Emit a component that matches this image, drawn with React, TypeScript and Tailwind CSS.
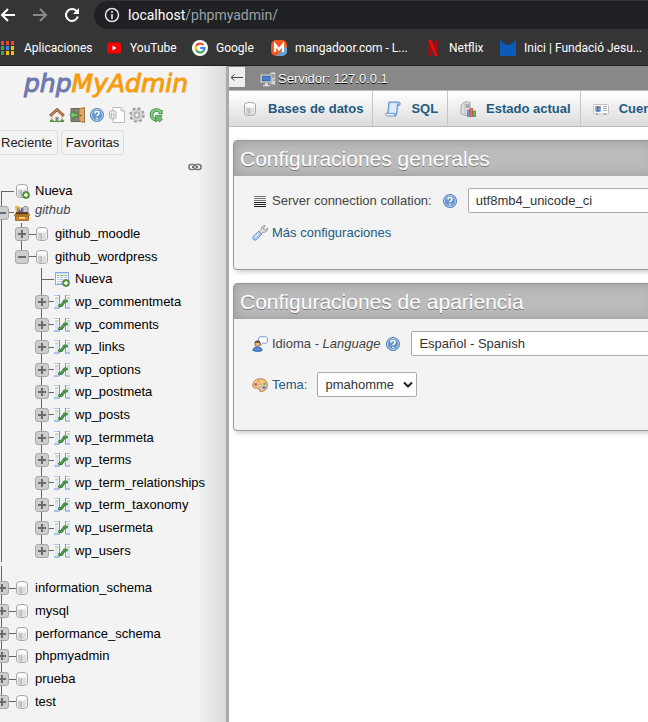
import React from "react";

type Row = { name: string };

const wordpressTables: Row[] = [
  { name: "wp_commentmeta" },
  { name: "wp_comments" },
  { name: "wp_links" },
  { name: "wp_options" },
  { name: "wp_postmeta" },
  { name: "wp_posts" },
  { name: "wp_termmeta" },
  { name: "wp_terms" },
  { name: "wp_term_relationships" },
  { name: "wp_term_taxonomy" },
  { name: "wp_usermeta" },
  { name: "wp_users" },
];

const databases: Row[] = [
  { name: "information_schema" },
  { name: "mysql" },
  { name: "performance_schema" },
  { name: "phpmyadmin" },
  { name: "prueba" },
  { name: "test" },
];

/* ---------- icons ---------- */

function Svg({ children, size = 16 }: { children: React.ReactNode; size?: number }) {
  return (
    <svg width={size} height={size} viewBox="0 0 16 16" className="block shrink-0" fill="none" aria-hidden="true">
      {children}
    </svg>
  );
}

function Cylinder() {
  return (
    <>
      <path d="M2.500 3.600C2.500 0.800 13.500 0.800 13.500 3.600V12.400C13.500 15.200 2.500 15.200 2.500 12.400Z" fill="#f1f1f1" stroke="#a6a6a6" />
      <path d="M4 6.500c1.200.6 2.500.8 4 .8v6.200C6.600 13.500 5 13.200 4 12.500Z" fill="#cfcfcf" />
      <path d="M8 7.300c1.500 0 3-.3 4-.8v6c-1 .7-2.500 1-4 1z" fill="#dedede" />
      <path d="M6.500 7h1.500v6.500h-1.500z" fill="#bcbcbc" />
      <ellipse cx="8" cy="4" rx="4.400" ry="1.700" fill="#fff" />
    </>
  );
}

const DbIcon = () => (
  <Svg>
    <Cylinder />
  </Svg>
);

function AddBadge() {
  return (
    <>
      <circle cx="12" cy="12" r="3.500" fill="#5f9c3f" stroke="#3c7428" strokeWidth=".7" />
      <path d="M12 10v4M10 12h4" stroke="#fff" strokeWidth="1.300" />
    </>
  );
}

const DbAddIcon = () => (
  <Svg>
    <Cylinder />
    <AddBadge />
  </Svg>
);

const TableAddIcon = () => (
  <Svg>
    <rect x="1.500" y="1.500" width="13" height="12" fill="#fff" stroke="#86ade0" />
    <path d="M2 2.500h12" stroke="#c3d9f3" />
    <path d="M3 4.500h10" stroke="#77b45d" />
    <path d="M3 6.500h10M3 8.500h10M3 10.500h8M3 12.500h6" stroke="#a9c4e6" />
    <path d="M5.500 4v9M10 4v9" stroke="#fff" strokeWidth=".8" />
    <AddBadge />
  </Svg>
);

const TableIcon = () => (
  <Svg>
    <path d="M0 1.500h5v12.500H0zM12 1.500h4v12.500h-4z" fill="#fff" />
    <path d="M0 1.500h5M12 1.500h4" stroke="#a9c6ec" />
    <path d="M0 14h5.500M11.500 14H16" stroke="#5c8ccc" />
    <path d="M5.500 1v13M11.500 1v13" stroke="#6d98d4" />
    <path d="M1 4h3.500M13 4h3" stroke="#85ba70" />
    <path d="M1 6h3.500M1 8h3.500M1 10h3.500M1 12h3.500M13 6h3M13 8h3M13 10h3M13 12h3" stroke="#b5cdea" />
    <path d="M5.500 11.500H7.500L10.500 7H12.500" stroke="#367d3a" strokeWidth="3" strokeLinecap="round" strokeLinejoin="round" />
    <path d="M5.500 11.300H7.500L10.500 6.800H12.500" stroke="#62ad60" strokeWidth="1" strokeLinecap="round" />
  </Svg>
);

const GroupIcon = () => (
  <Svg>
    <path d="M1 1.500l2-1 2 1-1 7H2z" fill="#e7bd3d" />
    <path d="M4 3h4v7H4z" fill="#e8e8f0" stroke="#77708d" strokeWidth=".8" />
    <path d="M5 8V4.500L6.500 7 8 3.500V8" stroke="#5b3b83" />
    <path d="M9 2.500c0-1.500 5-1.500 5 0V9H9z" fill="#c9c9cd" stroke="#777" strokeWidth=".8" />
    <path d="M2.500 7h11l1.800 2.500H.7z" fill="#5a3f28" />
    <path d="M.6 9.500h14.800V11H.6z" fill="#efa83a" stroke="#9a6016" strokeWidth=".7" />
    <path d="M1.500 11h13v4.400h-13z" fill="#d3871f" stroke="#8a5410" strokeWidth=".8" />
    <path d="M5 12.800h6" stroke="#fbe0a5" strokeWidth="1.500" />
  </Svg>
);

const HomeIcon = () => (
  <Svg>
    <path d="M3 8.500L8 4l5 4.500V14.500H3z" fill="#f6eee2" stroke="#a88260" strokeWidth=".8" />
    <path d="M1 8.800L8 2.500l7 6.300" stroke="#8b5a32" strokeWidth="2.500" />
    <path d="M1.500 8.400L8 2.600l6.500 5.800" stroke="#dca76d" strokeWidth="1" />
    <path d="M6.500 10h3v5h-3z" fill="#7b8896" />
    <path d="M.5 14.300c.5-2.400 4-2.400 4.500 0zM11 14.300c.5-2.400 4-2.400 4.500 0z" fill="#58a440" />
    <path d="M1 14.500h14" stroke="#4d8f37" />
  </Svg>
);

const ExitIcon = () => (
  <Svg>
    <path d="M2 1.500h9v13H2z" fill="#86827b" stroke="#6a655d" />
    <path d="M10 1.800L15.500.5v15L10 14.200z" fill="#dca667" stroke="#9a6429" strokeWidth=".8" />
    <circle cx="11.500" cy="8.500" r=".8" fill="#6b4218" />
    <path d="M.8 8L5 3.800v2.500h4v3.400H5v2.500z" fill="#7cc56c" stroke="#2f7a2c" strokeWidth=".8" />
  </Svg>
);

const HelpIcon = () => (
  <Svg>
    <circle cx="8" cy="8" r="6.600" fill="#6795cc" stroke="#4f7bb4" strokeWidth=".8" />
    <circle cx="8" cy="8" r="5.500" stroke="#c2d7ef" strokeWidth=".9" />
    <path d="M6 6.500c0-2.700 4-2.600 4-.2 0 1.500-2 1.500-2 3" stroke="#fff" strokeWidth="1.600" />
    <path d="M8 10.700v1.500" stroke="#fff" strokeWidth="1.600" />
  </Svg>
);

const DocsIcon = () => (
  <Svg>
    <path d="M4 .5h8L15.500 4v11.500H4z" fill="#fff" stroke="#bbb" />
    <path d="M12 .5V4h3.500" fill="#eee" stroke="#bbb" />
    <path d="M.5 5c0-1.700 6.500-1.700 6.500 0v5.500c0 1.700-6.500 1.700-6.500 0z" fill="#eee" stroke="#a7a7a7" strokeWidth=".9" />
    <path d="M2.500 6v4.500M4.800 6v4.500" stroke="#b3b3b3" />
  </Svg>
);

const GearIcon = () => (
  <Svg>
    <circle cx="8" cy="8" r="6.500" stroke="#989898" strokeWidth="2.400" strokeDasharray="2.600 2.500" />
    <circle cx="8" cy="8" r="4.400" stroke="#a3a3a3" strokeWidth="3.400" />
    <circle cx="8" cy="8" r="4.500" stroke="#d9d9d9" strokeWidth="2.200" />
    <circle cx="8" cy="8" r="2.200" fill="#f3f3f3" stroke="#909090" strokeWidth=".8" />
  </Svg>
);

const ReloadIcon = () => (
  <Svg>
    <path d="M11.500 5C9 1.500 2.500 2.800 2.500 7.800c0 3 2 4.700 4.500 4.700" stroke="#3d8b42" strokeWidth="3.600" />
    <path d="M11.500 5C9 1.500 2.500 2.800 2.500 7.800c0 3 2 4.700 4.500 4.700" stroke="#83c985" strokeWidth="2" />
    <path d="M6.500 8.500h6.500l-1 2.500 1.500 1.500-3 2.500-1.500-1.500-2.500 1.500z" fill="#6aba6d" stroke="#3d8b42" strokeWidth=".7" />
    <path d="M9.500 6.500h3.500V3" stroke="#4a994f" strokeWidth="1.400" />
  </Svg>
);

const LinkIcon = () => (
  <Svg>
    <rect x="2" y="5.500" width="6.500" height="5" rx="2" stroke="#777" strokeWidth="1.600" />
    <rect x="7.500" y="5.500" width="6.500" height="5" rx="2" stroke="#777" strokeWidth="1.600" />
    <path d="M5 8h2M9 8h2" stroke="#444" strokeWidth="1.600" />
    <path d="M7 8h2" stroke="#ddd" strokeWidth="1.600" />
  </Svg>
);

const ServerIcon = () => (
  <Svg>
    <path d="M10 1.500l5.500-.8v13.600l-5.500-1z" fill="#d8d8d8" stroke="#888" strokeWidth=".7" />
    <path d="M12 4h2.500M12 6h2.500" stroke="#666" />
    <path d="M13 9h1.500" stroke="#58b34f" strokeWidth="1.500" />
    <rect x=".7" y="3.500" width="11" height="8" fill="#eee" stroke="#aaa" />
    <rect x="2.200" y="5" width="8" height="5" fill="#4b7fcb" stroke="#23508f" strokeWidth=".7" />
    <path d="M5 12h3v2h2v1.200H3V14h2z" fill="#ddd" />
  </Svg>
);

const SqlIcon = () => (
  <Svg>
    <path d="M4 1H14c1.700.3 1.700 3 0 3.500H12.700L11.500 14H2.500z" fill="#a8ccf4" stroke="#5b8fd0" />
    <path d="M5.300 2.200h6.500L10.500 12H4z" fill="#dcebfc" />
    <path d="M.8 12.300h8.500c-.3 2 .6 2.700 1.700 2.700H2.500C1 15 .5 14 .8 12.300z" fill="#eef6fe" stroke="#5b8fd0" strokeWidth=".9" />
    <path d="M12.700 4.500V2.500" stroke="#5b8fd0" />
  </Svg>
);

const StatusIcon = () => (
  <Svg>
    <path d="M1 4l4-3.300 5 .8v11L6 14.500 1 13z" fill="#dedede" stroke="#9a9a9a" strokeWidth=".8" />
    <path d="M5.500 4h4M5.500 6h4" stroke="#777" />
    <path d="M5 2v12" stroke="#bbb" />
    <path d="M7.500 9h2.400v6.500H7.500z" fill="#6da0e8" stroke="#3365b4" strokeWidth=".6" />
    <path d="M10.200 7.500h2.400v8h-2.400z" fill="#f2705a" stroke="#c3311f" strokeWidth=".6" />
    <path d="M13 10h2.500v5.500H13z" fill="#6cbc5c" stroke="#337e2b" strokeWidth=".6" />
  </Svg>
);

const CardIcon = () => (
  <Svg>
    <rect x=".5" y="3.500" width="15" height="9.500" rx="1" fill="#fafafa" stroke="#c4c4c4" />
    <rect x="2" y="5" width="6" height="5.500" fill="#74aee6" />
    <circle cx="5" cy="6.800" r="1.500" fill="#a35b2b" />
    <path d="M3 10.500c.3-2.300 3.700-2.300 4 0z" fill="#2d66ac" />
    <path d="M10 5.500h4M10 7.500h4M10 9.500h4" stroke="#a9b4c2" />
    <path d="M3 13h2M11 13h2" stroke="#777" />
  </Svg>
);

const LinesIcon = () => (
  <Svg>
    <path d="M2 3.500h12M2 5.500h12M2 7.500h12" stroke="#777" />
    <path d="M2 9.500h12M2 11.500h12M2 13.500h12" stroke="#222" />
  </Svg>
);

const WrenchIcon = () => (
  <Svg>
    <path d="M7.500 6.500l1.800-2C9 2 11 .6 13.200.8L11.500 2.800l.3 1.700 1.700.3L15.500 3.200c.3 3-2.300 4.600-4.700 4l-1.800 2z" fill="#e4e4e4" stroke="#8a8a8a" strokeWidth=".9" />
    <path d="M6.800 6.200l3 3-5.300 5.500c-2 1.500-4.800-1-3.300-3.300z" fill="#a9c7f2" stroke="#5f8bd0" strokeWidth=".9" />
    <path d="M2.800 12.300L7 8" stroke="#e0ebfb" strokeWidth="1.300" />
  </Svg>
);

const LanguageIcon = () => (
  <Svg>
    <path d="M8 .7h6l1.500 1.200v4L14 7.200h-2.800L7.700 9.500 8.500 7 6.700 5.500V2z" fill="#f5faff" stroke="#7199cd" strokeWidth=".9" />
    <path d="M.8 14.500c0-5 9.400-5 9.400 0-2 1.300-7.400 1.300-9.400 0z" fill="#4d8bdb" stroke="#2457a0" strokeWidth=".7" />
    <circle cx="5.500" cy="7.800" r="2.700" fill="#eab887" stroke="#7d4b22" strokeWidth=".7" />
    <path d="M2.700 7.300c0-3.500 5.500-3.800 5.700 0-2-1.200-4-1.200-5.700 0z" fill="#6a3f1e" />
  </Svg>
);

const PaletteIcon = () => (
  <Svg>
    <path d="M.8 8C1 4 4.500 1.800 8.500 1.800c4 0 6.800 2.500 6.800 6 0 4-3 6.700-6 6.700-2.800 0-1.300-2.700-3.300-3.300C4 10.700.8 12 .8 8z" fill="#f0c79c" stroke="#b06c34" strokeWidth=".9" />
    <circle cx="3.800" cy="7.500" r="1.400" fill="#dd5a3c" />
    <circle cx="6.300" cy="4.700" r="1.400" fill="#f0a63a" />
    <circle cx="10" cy="4.300" r="1.300" fill="#f2d340" />
    <circle cx="12.700" cy="6.800" r="1.300" fill="#6cb45a" />
    <circle cx="12" cy="10.500" r="1.500" fill="#4a83d0" />
    <circle cx="8.300" cy="8.500" r="1.300" fill="#fff" stroke="#a4622c" strokeWidth=".6" />
  </Svg>
);

/* ---------- browser frame ---------- */

function BrowserBar() {
  const bookmark = "flex shrink-0 items-center whitespace-nowrap";
  return (
    <header className="h-[66px] shrink-0 overflow-hidden border-b border-[#1f1f1f] bg-[#353535] font-['Roboto','Open_Sans',sans-serif] text-white">
      <div className="flex h-[30px] items-center">
        <button aria-label="Atrás" className="w-4">
          <svg width="16" height="16" viewBox="0 0 16 16" fill="none" stroke="#fff" strokeWidth="2">
            <path d="M15 8H2.500M8 2L2 8l6 6" />
          </svg>
        </button>
        <button aria-label="Adelante" className="ml-4 w-4">
          <svg width="16" height="16" viewBox="0 0 16 16" fill="none" stroke="#8a8a8a" strokeWidth="2">
            <path d="M1 8h12.500M8 2l6 6-6 6" />
          </svg>
        </button>
        <button aria-label="Recargar" className="ml-4 w-4">
          <svg width="16" height="16" viewBox="0 0 16 16" fill="none" stroke="#fff" strokeWidth="2">
            <path d="M13.800 9.500A6 6 0 1 1 12.500 4L14 5.500" />
            <path d="M15 1v6H9z" fill="#fff" stroke="none" />
          </svg>
        </button>
        <div className="-mr-5 ml-[14px] flex h-7 flex-1 items-center rounded-full bg-[#202124] pl-[10px]">
          <svg width="16" height="16" viewBox="0 0 16 16" fill="none" stroke="#dfe1e5" strokeWidth="1.500">
            <circle cx="8" cy="8" r="6.500" />
            <path d="M8 7v5M8 4v1.700" strokeWidth="1.700" />
          </svg>
          <p className="ml-2 text-[14px] leading-5 text-[#9aa0a6]">
            <span className="text-white">localhost</span>/phpmyadmin/
          </p>
        </div>
      </div>
      <nav className="flex h-[35px] items-center text-[12px] leading-4">
        <a href="#apps" className={bookmark}>
          <svg width="14" height="14" viewBox="0 0 14 14" className="mr-[10px]">
            <path d="M1 0h3v4H1zM6 0h3v4H6zM11 0h3v4h-3z" fill="#ea4335" />
            <path d="M1 5h3v4H1z" fill="#34a853" />
            <path d="M6 5h3v4H6z" fill="#4285f4" />
            <path d="M11 5h3v4h-3z" fill="#fbbc04" />
            <path d="M1 10h3v4H1z" fill="#34a853" />
            <path d="M6 10h3v4H6zM11 10h3v4h-3z" fill="#fbbc04" />
          </svg>
          <span className="w-[82px]">Aplicaciones</span>
        </a>
        <a href="#youtube" className={bookmark}>
          <svg width="16" height="16" viewBox="0 0 16 16" className="mr-2">
            <rect x="1" y="2.500" width="14" height="11" rx="2.500" fill="#f00" />
            <path d="M6.500 5.500v5l4-2.500z" fill="#fff" />
          </svg>
          <span className="w-[62px]">YouTube</span>
        </a>
        <a href="#google" className={bookmark}>
          <svg width="16" height="16" viewBox="0 0 16 16" className="mr-2" fill="none" strokeWidth="2.200">
            <circle cx="8" cy="8" r="8" fill="#fff" />
            <path d="M4.200 5.700A4.500 4.500 0 0 1 11.300 4.900" stroke="#ea4335" />
            <path d="M4.200 5.700a4.500 4.500 0 0 0 0 4.600" stroke="#fbbc04" />
            <path d="M4.200 10.300a4.500 4.500 0 0 0 6.800 1.100" stroke="#34a853" />
            <path d="M11 11.400A4.500 4.500 0 0 0 12.500 8H8.200" stroke="#4285f4" />
          </svg>
          <span className="w-[55px]">Google</span>
        </a>
        <a href="#mangadoor" className={bookmark}>
          <svg width="16" height="16" viewBox="0 0 16 16" className="mr-2">
            <rect width="16" height="16" rx="5" fill="#f4581f" />
            <path d="M16 6v5a5 5 0 0 1-5 5H5z" fill="#5aa4e0" />
            <path d="M4 12V4.500l4 5 4-5V12" fill="none" stroke="#fff" strokeWidth="2.200" />
          </svg>
          <span className="w-[130px]">mangadoor.com - L...</span>
        </a>
        <a href="#netflix" className={bookmark}>
          <svg width="16" height="16" viewBox="0 0 16 16" className="mr-2">
            <path d="M3.500 0h3v16h-3zM9.500 0h3v16h-3z" fill="#b1060f" />
            <path d="M3.500 0h3l6 16h-3z" fill="#e50914" />
          </svg>
          <span className="w-[51px]">Netflix</span>
        </a>
        <a href="#fundacio" className={bookmark}>
          <svg width="16" height="16" viewBox="0 0 16 16" className="mr-2">
            <path d="M0 0l2 1.500L3 3l2 1 3 1 3-1 2-1 1-1.500L16 0v16H0z" fill="#0a5cb8" />
            <path d="M2 0l2 2 4 1.500L12 2l2-2" fill="none" stroke="#0f4280" strokeDasharray="1 1" />
          </svg>
          <span>Inici | Fundació Jesu...</span>
        </a>
      </nav>
    </header>
  );
}

/* ---------- navigation tree ---------- */

function Toggle({ open, last }: { open?: boolean; last?: boolean }) {
  return (
    <div className="flex w-[14px] shrink-0 flex-col self-stretch">
      <div className="ml-[6px] w-px flex-1 bg-[#666]" />
      <button
        aria-label={open ? "Contraer" : "Expandir"}
        className="flex h-[14px] w-[14px] shrink-0 items-center justify-center rounded-[3px] border border-[#a8a8a8] bg-[#cecece]"
      >
        <svg width="10" height="10" viewBox="0 0 10 10" stroke="#6c6c6c" strokeWidth="2" className="block shrink-0">
          <path d={open ? "M1 5h8" : "M1 5h8M5 1v8"} />
        </svg>
      </button>
      <div className={last ? "ml-[6px] w-px flex-1" : "ml-[6px] w-px flex-1 bg-[#666]"} />
    </div>
  );
}

function Guide({ line }: { line?: boolean }) {
  return (
    <div className="w-5 shrink-0 self-stretch pl-[6px]">
      <div className={line ? "h-full w-px bg-[#666]" : "h-full w-px"} />
    </div>
  );
}

const Dash = () => <div className="h-px w-[5px] shrink-0 bg-[#666]" />;

const DbDash = () => <div className="-mr-[2px] h-px w-[7px] shrink-0 bg-[#666]" />;

function Label({ children }: { children: string }) {
  return (
    <a href="#tree" className="ml-[5px] whitespace-nowrap text-black">
      {children}
    </a>
  );
}

function Sidebar() {
  return (
    <aside className="flex w-[229px] shrink-0 flex-col overflow-hidden border-r-[3px] border-[#aaa] bg-linear-to-r from-[#f3f3f3] from-87% to-[#d9dbdd]">
      <div className="mt-px pl-[24px] font-['DejaVu_Sans',sans-serif] text-[25px] leading-[34px] italic [-webkit-text-stroke:1px_currentColor]">
        <a href="#home" className="text-[#6c78af]">
          php<span className="text-[#f89c0e]">MyAdmin</span>
        </a>
      </div>
      <div className="mt-[6px] flex gap-1 pl-[49px] pr-[40px]">
        <button aria-label="Inicio"><HomeIcon /></button>
        <button aria-label="Salir"><ExitIcon /></button>
        <button aria-label="Ayuda"><HelpIcon /></button>
        <button aria-label="Documentación"><DocsIcon /></button>
        <button aria-label="Configuración"><GearIcon /></button>
        <button aria-label="Recargar navegación"><ReloadIcon /></button>
      </div>
      <div className="mt-[7px] flex gap-[3px] text-[13px] leading-[23px] text-[#222]">
        <button className="-ml-1 w-[62px] rounded-[3px] border border-[#ddd] pl-1 text-left">Reciente</button>
        <button className="w-[63px] rounded-[3px] border border-[#ddd] text-center">Favoritas</button>
      </div>
      <div className="mt-1 flex justify-end pr-[23px]">
        <button aria-label="Enlazar con el panel principal"><LinkIcon /></button>
      </div>

      <div className="-ml-[5px] mt-[5px] text-[13px] leading-4">
        <div className="flex h-[22px] items-center">
          <div className="flex w-[19px] flex-col self-stretch pl-[6px] pt-[11px]">
            <div className="w-full flex-1 border-l border-t border-[#666]" />
          </div>
          <DbAddIcon />
          <Label>Nueva</Label>
        </div>
        <div className="flex h-[21px] items-center">
          <Toggle open />
          <Dash />
          <GroupIcon />
          <a href="#github" className="mb-[5px] ml-[5px] text-[#444] italic">github</a>
        </div>
        <div className="flex h-[22px] items-center">
          <Guide line />
          <Toggle />
          <DbDash />
          <DbIcon />
          <Label>github_moodle</Label>
        </div>
        <div className="flex h-[23px] items-center">
          <Guide line />
          <Toggle open last />
          <DbDash />
          <DbIcon />
          <Label>github_wordpress</Label>
        </div>
        <div className="flex h-[294px] flex-col">
          <div className="flex flex-1 items-center">
            <Guide line />
            <Guide />
            <div className="flex w-[19px] shrink-0 items-center self-stretch pl-[6px]">
              <div className="h-full w-px bg-[#666]" />
              <div className="h-px flex-1 bg-[#666]" />
            </div>
            <TableAddIcon />
            <Label>Nueva</Label>
          </div>
          {wordpressTables.map((t, i) => (
            <div key={t.name} className="flex flex-1 items-center">
              <Guide line />
              <Guide />
              <Toggle last={i === wordpressTables.length - 1} />
              <Dash />
              <TableIcon />
              <Label>{t.name}</Label>
            </div>
          ))}
        </div>
        <div className="mt-1 flex h-[11px]">
          <Guide line />
        </div>
        <div className="flex h-[136px] flex-col">
          {databases.map((d, i) => (
            <div key={d.name} className="flex flex-1 items-center">
              <Toggle last={i === databases.length - 1} />
              <DbDash />
              <DbIcon />
              <Label>{d.name}</Label>
            </div>
          ))}
        </div>
      </div>
    </aside>
  );
}

/* ---------- main panel ---------- */

function Tab({ icon, children }: { icon: React.ReactNode; children: string }) {
  return (
    <a
      href="#tab"
      className="flex shrink-0 items-center gap-[10px] border-r border-[#c4c4c4] pl-3 pr-[9px] text-[13px] font-bold whitespace-nowrap text-[#235a81]"
    >
      {icon}
      {children}
    </a>
  );
}

function Panel({ title, children }: { title: string; children: React.ReactNode }) {
  return (
    <section className="-mr-2 ml-1 overflow-hidden rounded-[4px] border border-[#999] bg-[#f3f3f3] shadow-[2px_2px_5px_#ccc]">
      <h2 className="h-[35px] bg-[#bbb] pl-[6px] text-[21px] leading-9 whitespace-nowrap text-white shadow-[inset_0_0_12px_#999] [text-shadow:0_1px_0_#777]">
        {title}
      </h2>
      {children}
    </section>
  );
}

function Main() {
  const field = "h-[25px] shrink-0 appearance-none rounded-[2px] border border-[#aaa] bg-white pl-[7px] text-[13px] text-[#333]";
  return (
    <main className="min-w-0 flex-1 overflow-hidden bg-white">
      <div className="flex h-6 items-center bg-[#888] text-[13px] text-white">
        <button aria-label="Ocultar panel" className="mb-[2px] flex h-5 w-4 items-center justify-center bg-[#eee]">
          <svg width="14" height="8" viewBox="0 0 14 8" fill="none" stroke="#444">
            <path d="M13 4.500H1.500M4.500 1.500L1 4.500l3.500 3" />
          </svg>
        </button>
        <a href="#server" className="ml-[15px] flex items-center gap-[2px] pt-[2px] [text-shadow:0_1px_0_#000]">
          <ServerIcon />
          Servidor: 127.0.0.1
        </a>
      </div>
      <nav className="flex h-[37px] border-t border-b border-[#bbb] bg-linear-to-b from-white to-[#dcdcdc] pl-px">
        <Tab icon={<DbIcon />}>Bases de datos</Tab>
        <Tab icon={<SqlIcon />}>SQL</Tab>
        <Tab icon={<StatusIcon />}>Estado actual</Tab>
        <Tab icon={<CardIcon />}>Cuentas</Tab>
      </nav>

      <div className="mt-[13px] flex flex-col gap-[13px] text-[13px] leading-4 text-[#444]">
        <Panel title="Configuraciones generales">
          <div className="flex flex-col gap-3 pb-7 pl-[18px] pt-3">
            <div className="flex items-center">
              <LinesIcon />
              <label htmlFor="collation" className="ml-1 shrink-0">Server connection collation:</label>
              <button aria-label="Ayuda de cotejamiento" className="mx-[10px]"><HelpIcon /></button>
              <select id="collation" className={field + " w-[240px]"}>
                <option>utf8mb4_unicode_ci</option>
              </select>
            </div>
            <a href="#more" className="flex items-center gap-1 text-[#235a81]">
              <WrenchIcon />
              Más configuraciones
            </a>
          </div>
        </Panel>
        <Panel title="Configuraciones de apariencia">
          <div className="flex flex-col gap-4 pb-[33px] pl-[18px] pt-3">
            <div className="flex items-center">
              <LanguageIcon />
              <label htmlFor="language" className="ml-1 shrink-0">
                Idioma - <i>Language</i>
              </label>
              <button aria-label="Ayuda de idioma" className="ml-[5px] mr-[10px]"><HelpIcon /></button>
              <select id="language" className={field + " w-[300px]"}>
                <option>Español - Spanish</option>
              </select>
            </div>
            <div className="flex items-center">
              <PaletteIcon />
              <label htmlFor="theme" className="ml-1 mr-[10px] text-[#235a81]">Tema:</label>
              <div className="grid w-[100px] items-center">
                <select id="theme" className={field + " col-start-1 row-start-1 w-full"}>
                  <option>pmahomme</option>
                </select>
                <svg width="10" height="8" viewBox="0 0 10 8" className="pointer-events-none col-start-1 row-start-1 mr-1 justify-self-end" fill="none" stroke="#222" strokeWidth="2">
                  <path d="M1 1.500l4 4 4-4" />
                </svg>
              </div>
            </div>
          </div>
        </Panel>
      </div>
    </main>
  );
}

export default function App() {
  return (
    <div className="flex min-h-screen flex-col overflow-hidden font-['Liberation_Sans',Arial,sans-serif]">
      <BrowserBar />
      <div className="flex flex-1">
        <Sidebar />
        <Main />
      </div>
    </div>
  );
}
